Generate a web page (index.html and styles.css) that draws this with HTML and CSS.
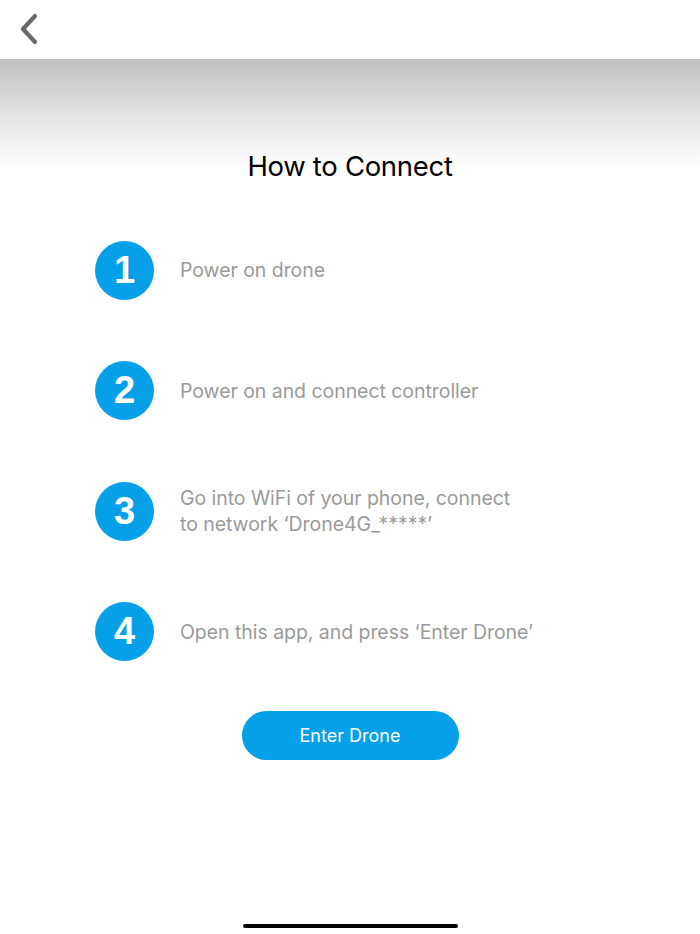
FILE: index.html
```html
<!DOCTYPE html>
<html>
<head>
<meta charset="utf-8">
<link rel="stylesheet" href="styles.css">
</head>
<body>
<header class="topbar">
  <button class="back" aria-label="Back">
    <svg width="20" height="32" viewBox="0 0 20 32"><path d="M16 3 L4 16 L16 29" fill="none" stroke="#6b6b6b" stroke-width="4.2" stroke-linecap="round" stroke-linejoin="round"/></svg>
  </button>
</header>
<main class="content">
  <h1 class="title">How to Connect</h1>
  <ol class="steps">
    <li class="step"><span class="num">1</span><span class="text">Power on drone</span></li>
    <li class="step"><span class="num">2</span><span class="text">Power on and connect controller</span></li>
    <li class="step"><span class="num">3</span><span class="text">Go into WiFi of your phone, connect<br>to network ‘Drone4G_*****’</span></li>
    <li class="step"><span class="num">4</span><span class="text">Open this app, and press ‘Enter Drone’</span></li>
  </ol>
  <div class="actions"><button class="enter">Enter Drone</button></div>
</main>
<div class="home-indicator"></div>
</body>
</html>
```

FILE: styles.css
```css
* { box-sizing: border-box; }
html, body { margin: 0; padding: 0; }
body {
  width: 700px;
  height: 934px;
  background: #fff;
  font-family: Inter, "Noto Sans", "Liberation Sans", sans-serif;
  position: relative;
  overflow: hidden;
}
.topbar {
  height: 59px;
  background: #fff;
  display: flex;
  align-items: center;
  padding-left: 19px;
}
.back {
  border: 0;
  background: none;
  padding: 0;
  display: flex;
  margin-top: -1px;
}
.content {
  background: linear-gradient(to bottom, #bfbfbf 0px, #dcdcdc 45px, #f8f8f8 95px, #fff 110px);
  display: flex;
  flex-direction: column;
  align-items: center;
  padding-top: 90px;
}
.title {
  margin: 0;
  font-size: 27.5px;
  line-height: 34px;
  font-weight: 400;
  color: #000;
  letter-spacing: -0.3px;
}
.steps {
  list-style: none;
  margin: 27px 0 0;
  padding: 0;
  width: 100%;
  display: flex;
  flex-direction: column;
}
.step {
  height: 120.5px;
  display: flex;
  align-items: center;
  padding-left: 95px;
  gap: 26px;
}
.num {
  width: 59px;
  height: 59px;
  border-radius: 50%;
  background: #05a0e8;
  color: #fff;
  font-size: 38px;
  font-weight: 700;
  display: flex;
  align-items: center;
  justify-content: center;
  flex-shrink: 0;
  font-family: "Liberation Sans", Arial, sans-serif;
}
.text {
  font-size: 19.5px;
  line-height: 26px;
  color: #9a9a9a;
  letter-spacing: -0.05px;
}
.actions {
  margin-top: 19px;
}
.enter {
  width: 217px;
  height: 49px;
  border: 0;
  border-radius: 25px;
  background: #05a0e8;
  color: #fff;
  font-family: Inter, "Noto Sans", "Liberation Sans", sans-serif;
  font-size: 18px;
}
.home-indicator {
  position: absolute;
  left: 243px;
  bottom: 6px;
  width: 215px;
  height: 4.5px;
  border-radius: 3px;
  background: #000;
}
```
